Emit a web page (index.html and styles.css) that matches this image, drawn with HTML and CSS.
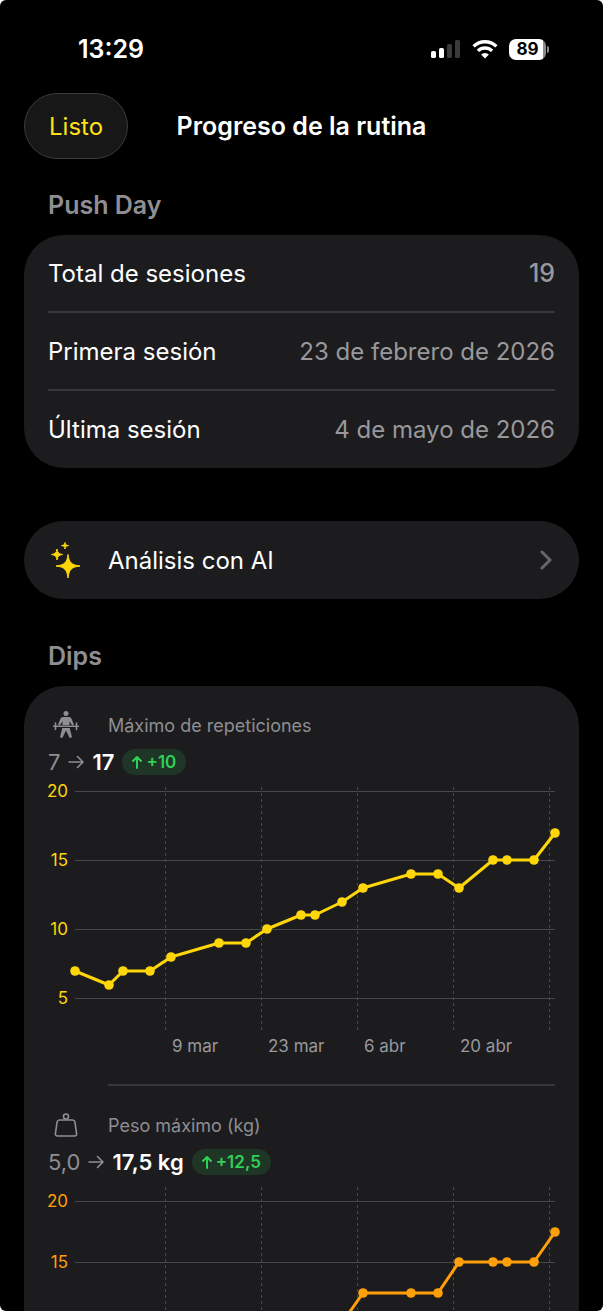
FILE: index.html
```html
<!DOCTYPE html>
<html lang="es">
<head>
  <meta charset="UTF-8">
  <meta name="viewport" content="width=device-width, initial-scale=1">
  <title>Progreso de la rutina</title>
  <link rel="stylesheet" href="styles.css">
</head>
<body>

<div class="screen">

  <div class="status-bar">
    <time class="clock">13:29</time>
    <div class="status-icons">
      <svg class="signal" width="30" height="20" viewBox="0 0 30 20" aria-hidden="true">
        <rect x="0" y="12" width="5" height="7" rx="1.6" fill="#fff"/>
        <rect x="8" y="9" width="5" height="10" rx="1.6" fill="#fff"/>
        <rect x="16" y="5" width="5" height="14" rx="1.6" fill="#3b3b3b"/>
        <rect x="24" y="1" width="5" height="18" rx="1.6" fill="#3b3b3b"/>
      </svg>
      <svg class="wifi" width="26" height="20" viewBox="0 0 26 20" aria-hidden="true">
        <g fill="none" stroke="#fff" stroke-width="3.4">
          <path d="M1.6 7.4a16.2 16.2 0 0 1 22.8 0"/>
          <path d="M5.9 11.9a10.1 10.1 0 0 1 14.2 0"/>
        </g>
        <path d="M13 19.4l-3.9-3.9a5.6 5.6 0 0 1 7.8 0z" fill="#fff"/>
      </svg>
      <div class="battery">
        <span class="battery-level">89</span>
      </div>
    </div>
  </div>

  <header class="nav">
    <button class="done" type="button">Listo</button>
    <h1>Progreso de la rutina</h1>
  </header>

  <main class="content">
    <h2>Push Day</h2>
    <dl class="card summary">
      <div class="row">
        <dt>Total de sesiones</dt>
        <dd class="strong">19</dd>
      </div>
      <div class="row">
        <dt>Primera sesión</dt>
        <dd>23 de febrero de 2026</dd>
      </div>
      <div class="row">
        <dt>Última sesión</dt>
        <dd>4 de mayo de 2026</dd>
      </div>
    </dl>

    <a class="card ai-link" href="#">
      <svg width="36" height="40" viewBox="0 0 36 40" fill="#ffd60a" stroke="#ffd60a" stroke-linejoin="round" aria-hidden="true">
        <path d="M20 14.500C21 22.500 23.500 25 32 26C23.500 27 21 29.500 20 38C19 29.500 16.500 27 8 26C16.500 25 19 22.500 20 14.500Z"/>
        <path d="M9 9C9.600 12.800 10.700 13.900 14.500 14.500C10.700 15.100 9.600 16.200 9 20C8.400 16.200 7.300 15.100 3.500 14.500C7.300 13.900 8.400 12.800 9 9Z"/>
        <path d="M17 2.500C17.300 4.700 17.900 5.300 20.500 5.600C17.900 5.900 17.300 6.500 17 9C16.700 6.500 16.100 5.900 13.500 5.600C16.100 5.300 16.700 4.700 17 2.500Z"/>
      </svg>
      <span>Análisis con AI</span>
      <svg class="chevron" width="12" height="20" viewBox="0 0 12 20" aria-hidden="true">
        <path d="M2 2l8 8-8 8" fill="none" stroke="#68686c" stroke-width="3" stroke-linecap="round" stroke-linejoin="round"/>
      </svg>
    </a>

    <h2>Dips</h2>
    <div class="card">

      <section class="metric">
        <h3>
          <svg width="36" height="30" viewBox="0 0 36 30" aria-hidden="true">
            <circle cx="18" cy="3.500" r="2.500" fill="#8e8e93"/>
            <path d="M15 7h6c1.500 0 2.200.8 2.600 2l2.300 5.500-1.600 1-2.800-4v3.500h-7v-3.500l-2.800 4-1.600-1L12.400 9c.4-1.200 1.100-2 2.600-2z" fill="#8e8e93"/>
            <path d="M14.300 18h7.400l2.300 9.300-2.300.6-3.700-7.400-3.700 7.400-2.300-.6z" fill="#8e8e93"/>
            <g fill="none" stroke="#8e8e93" stroke-linecap="round">
              <path stroke-width="1.400" d="M5.500 16.200h25"/>
              <path stroke-width="1.600" d="M7.500 13v6.500M28.500 13v6.500"/>
            </g>
          </svg>
          Máximo de repeticiones
        </h3>
        <p class="change">
          <span class="from">7</span>
          <svg class="arrow" width="16" height="16" viewBox="0 0 16 16" role="img" aria-label="a"><path d="M1 8h14M9.500 2.500L15 8l-5.500 5.500"/></svg>
          <strong>17</strong>
          <span class="badge">
            <svg width="12" height="14" viewBox="0 0 12 14" aria-hidden="true"><path d="M6 13V2M2 6l4-4 4 4"/></svg>
            +10
          </span>
        </p>
        <svg class="chart reps" viewBox="0 0 507 282" role="img" aria-label="Máximo de repeticiones por sesión">
          <defs>
            <marker id="dot-reps" markerUnits="userSpaceOnUse" markerWidth="10" markerHeight="10" refX="5" refY="5">
              <circle cx="5" cy="5" r="4.800"/>
            </marker>
          </defs>
          <path class="grid" d="M27 11.500H507M27 80.500H507M27 149.500H507M27 218.500H507"/>
          <path class="grid weeks" d="M117.500 7V251M213.500 7V251M309.500 7V251M405.500 7V251M501.500 7V251"/>
          <g class="y-axis">
            <text x="20" y="17">20</text>
            <text x="20" y="86">15</text>
            <text x="20" y="155">10</text>
            <text x="20" y="224">5</text>
          </g>
          <g class="x-axis">
            <text x="124" y="272">9 mar</text>
            <text x="220" y="272">23 mar</text>
            <text x="316" y="272">6 abr</text>
            <text x="412" y="272">20 abr</text>
          </g>
          <polyline class="line" points="27,191 61,205 75,191 102,191 123,177 171,163 198,163 219,149 253,135 267,135 294,122 315,108 363,94 390,94 411,108 445,80 459,80 486,80 507,53"/>
        </svg>
      </section>

      <section class="metric">
        <h3>
          <svg width="36" height="30" viewBox="0 0 36 30" fill="none" stroke="#8e8e93" stroke-width="1.600" stroke-linejoin="round" aria-hidden="true">
            <circle cx="18" cy="6.500" r="2.500"/>
            <path d="M11.500 10h13a2.500 2.500 0 0 1 2.400 1.900l1.700 11.700a2 2 0 0 1-2 2.400H9.400a2 2 0 0 1-2-2.400l1.700-11.700a2.500 2.500 0 0 1 2.400-1.900z"/>
          </svg>
          Peso máximo (kg)
        </h3>
        <p class="change">
          <span class="from">5,0</span>
          <svg class="arrow" width="16" height="16" viewBox="0 0 16 16" role="img" aria-label="a"><path d="M1 8h14M9.500 2.500L15 8l-5.500 5.500"/></svg>
          <strong>17,5 kg</strong>
          <span class="badge">
            <svg width="12" height="14" viewBox="0 0 12 14" aria-hidden="true"><path d="M6 13V2M2 6l4-4 4 4"/></svg>
            +12,5
          </span>
        </p>
        <svg class="chart weight" viewBox="0 0 507 282" role="img" aria-label="Peso máximo por sesión">
          <defs>
            <marker id="dot-weight" markerUnits="userSpaceOnUse" markerWidth="10" markerHeight="10" refX="5" refY="5">
              <circle cx="5" cy="5" r="4.800"/>
            </marker>
          </defs>
          <path class="grid" d="M27 21.500H507M27 82.500H507M27 143.500H507M27 204.500H507"/>
          <path class="grid weeks" d="M117.500 7V251M213.500 7V251M309.500 7V251M405.500 7V251M501.500 7V251"/>
          <g class="y-axis">
            <text x="20" y="27">20</text>
            <text x="20" y="88">15</text>
          </g>
          <polyline class="line" points="27,204 61,204 75,204 102,204 123,204 171,174 198,174 219,174 253,143 267,143 294,143 315,113 363,113 390,113 411,82 445,82 459,82 486,82 507,52"/>
        </svg>
      </section>

    </div>
  </main>

</div>

</body>
</html>
```

FILE: styles.css
```css
* {
  box-sizing: border-box;
}

body {
  margin: 0;
  background: #fff;
  color: #fff;
  font-family: Inter, "Liberation Sans", sans-serif;
  font-size: 24px;
}

h1, h2, h3, p, dl, dd {
  margin: 0;
}

.screen {
  height: 100vh;
  display: flex;
  flex-direction: column;
  overflow: hidden;
  background: #000;
  border-radius: 6px;
}

/* status bar */
.status-bar {
  display: flex;
  justify-content: space-between;
  align-items: center;
  padding: 36px 57px 31px 78px;
  line-height: 26px;
}

.clock {
  font-size: 25px;
  font-weight: 600;
}

.status-icons {
  display: flex;
  align-items: center;
  gap: 11px;
}

.battery {
  position: relative;
  width: 37px;
  height: 21px;
  border-radius: 7px;
  background: linear-gradient(to right, #fff 34px, #8c8c8c 34px);
  color: #000;
  font-size: 17px;
  font-weight: 700;
  line-height: 21px;
  text-align: center;
}

.battery::after {
  content: "";
  position: absolute;
  top: 7px;
  right: -3px;
  width: 2px;
  height: 7px;
  border-radius: 0 2px 2px 0;
  background: #8c8c8c;
}

/* navigation */
.nav {
  display: grid;
  grid-template-columns: 1fr auto 1fr;
  align-items: center;
  padding: 0 24px;
}

.nav h1 {
  font-size: 25px;
  font-weight: 600;
}

.done {
  justify-self: start;
  height: 66px;
  padding: 0 24px;
  border: 1px solid #3c3c3d;
  border-radius: 33px;
  background: #171717;
  color: #ffe01a;
  font: inherit;
  cursor: pointer;
}

/* list */
.content {
  flex: 1;
  min-height: 0;
  padding: 0 24px;
  overflow-y: auto;
  scrollbar-width: none;
}

.content h2 {
  padding: 30px 24px 14px;
  color: #8e8e93;
  font-size: 25px;
  font-weight: 600;
  line-height: 32px;
}

.card {
  padding: 0 24px;
  border-radius: 40px;
  background: #1c1c1e;
}

.row {
  display: flex;
  justify-content: space-between;
  align-items: center;
  height: 78px;
  border-bottom: 2px solid #38383a;
}

.row:last-child {
  height: 77px;
  border-bottom: 0;
}

.row dd {
  color: #98989d;
}

.row .strong {
  font-size: 25px;
  font-weight: 500;
}

.ai-link {
  display: flex;
  align-items: center;
  gap: 24px;
  height: 78px;
  margin: 53px 0 11px;
  color: #fff;
  text-decoration: none;
}

.chevron {
  margin-left: auto;
  margin-right: 3px;
}

/* metrics */
.metric {
  padding: 24px 0;
}

.metric + .metric {
  position: relative;
}

.metric + .metric::before {
  content: "";
  position: absolute;
  top: -2px;
  left: 60px;
  right: 0;
  height: 2px;
  background: #38383a;
}

.metric h3 {
  display: flex;
  align-items: center;
  gap: 24px;
  height: 30px;
  color: #8e8e93;
  font-size: 18px;
  font-weight: 400;
}

.change {
  display: flex;
  align-items: center;
  gap: 8px;
  height: 28px;
  margin: 8px 0 4px;
  font-size: 22px;
}

.change strong {
  font-weight: 600;
}

.from {
  color: #8e8e93;
}

.arrow {
  fill: none;
  stroke: #8e8e93;
  stroke-width: 1.6;
  stroke-linecap: round;
  stroke-linejoin: round;
}

.badge {
  display: flex;
  align-items: center;
  gap: 3px;
  height: 26px;
  padding: 0 10px 0 9px;
  border-radius: 13px;
  background: #1f3526;
  color: #30d158;
  font-size: 17px;
  font-weight: 600;
}

.badge svg {
  fill: none;
  stroke: #30d158;
  stroke-width: 2;
  stroke-linecap: round;
  stroke-linejoin: round;
}

.chart {
  display: block;
  width: 100%;
  height: auto;
  overflow: visible;
  font-size: 17px;
}

.grid {
  fill: none;
  stroke: #48484a;
}

.weeks {
  stroke-dasharray: 3 3;
}

.y-axis {
  text-anchor: end;
}

.x-axis {
  fill: #98989d;
}

.line {
  fill: none;
  stroke-width: 3;
  stroke-linejoin: round;
}

.reps .y-axis,
.reps marker {
  fill: #ffd60a;
}

.reps .line {
  stroke: #ffd60a;
  marker: url(#dot-reps);
}

.weight .y-axis,
.weight marker {
  fill: #ff9f0a;
}

.weight .line {
  stroke: #ff9f0a;
  marker: url(#dot-weight);
}
```
